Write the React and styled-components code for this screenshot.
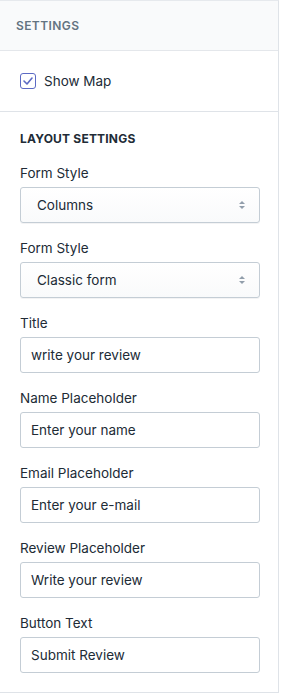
import React from 'react';
import styled, { createGlobalStyle } from 'styled-components';

const GlobalStyle = createGlobalStyle`
  body {
    margin: 0;
    background: #ffffff;
    font-family: Inter, "Liberation Sans", sans-serif;
    -webkit-font-smoothing: antialiased;
  }
`;

const Panel = styled.div`
  width: 278px;
  border-top: 1px solid #e6e9ed;
  border-right: 1px solid #dfe3e8;
  border-bottom: 1px solid #dfe3e8;
  background: #ffffff;
`;

const Header = styled.div`
  height: 49px;
  display: flex;
  align-items: center;
  padding-left: 16px;
  background: #f9fafb;
  border-bottom: 1px solid #e4e7eb;
  font-size: 12px;
  font-weight: 600;
  letter-spacing: 0.4px;
  color: #637381;
`;

const CheckRow = styled.label`
  height: 60px;
  display: flex;
  align-items: center;
  gap: 8px;
  padding-left: 20px;
  border-bottom: 1px solid #dfe3e8;
  font-size: 13.5px;
  color: #212b36;
`;

const Box = styled.span`
  width: 14px;
  height: 14px;
  border: 1px solid #5c6ac4;
  border-radius: 3px;
  display: flex;
  align-items: center;
  justify-content: center;
`;

const Section = styled.div`
  padding: 19px 18px 19px 20px;
`;

const Heading = styled.div`
  font-size: 12px;
  line-height: 16px;
  font-weight: 700;
  letter-spacing: 0.2px;
  color: #212b36;
  margin-bottom: 16px;
`;

const Field = styled.div`
  display: flex;
  flex-direction: column;
  gap: 4px;
  & + & {
    margin-top: 15px;
  }
`;

const Label = styled.div`
  font-size: 13.5px;
  line-height: 20px;
  color: #212b36;
`;

const SelectBox = styled.div`
  height: 34px;
  box-sizing: content-box;
  border: 1px solid #c4cdd5;
  border-radius: 3px;
  background: linear-gradient(#ffffff, #f9fafb);
  box-shadow: 0 1px 0 rgba(22, 29, 37, 0.05);
  display: flex;
  align-items: center;
  justify-content: space-between;
  padding: 0 13px 0 16px;
  font-size: 13.5px;
  color: #212b36;
`;

const TextBox = styled.div`
  height: 34px;
  box-sizing: content-box;
  border: 1px solid #c4cdd5;
  border-radius: 3px;
  background: #ffffff;
  display: flex;
  align-items: center;
  padding: 0 10px;
  font-size: 13.5px;
  color: #212b36;
`;

function Arrows() {
  return (
    <svg width="8" height="10" viewBox="0 0 8 10">
      <path d="M4 1 L7 4 H1 Z" fill="#919eab" />
      <path d="M4 9 L1 6 H7 Z" fill="#919eab" />
    </svg>
  );
}

const fields = [
  { label: 'Form Style', value: 'Columns', select: true },
  { label: 'Form Style', value: 'Classic form', select: true },
  { label: 'Title', value: 'write your review' },
  { label: 'Name Placeholder', value: 'Enter your name' },
  { label: 'Email Placeholder', value: 'Enter your e-mail' },
  { label: 'Review Placeholder', value: 'Write your review' },
  { label: 'Button Text', value: 'Submit Review' },
];

export default function App() {
  return (
    <>
      <GlobalStyle />
      <Panel>
        <Header>SETTINGS</Header>
        <CheckRow>
          <Box>
            <svg width="10" height="8" viewBox="0 0 10 8">
              <path d="M1 4 L4 7 L9 1" fill="none" stroke="#5c6ac4" strokeWidth="1.6" strokeLinecap="round" strokeLinejoin="round" />
            </svg>
          </Box>
          Show Map
        </CheckRow>
        <Section>
          <Heading>LAYOUT SETTINGS</Heading>
          {fields.map((f, i) => (
            <Field key={i}>
              <Label>{f.label}</Label>
              {f.select ? (
                <SelectBox>
                  {f.value}
                  <Arrows />
                </SelectBox>
              ) : (
                <TextBox>{f.value}</TextBox>
              )}
            </Field>
          ))}
        </Section>
      </Panel>
    </>
  );
}
